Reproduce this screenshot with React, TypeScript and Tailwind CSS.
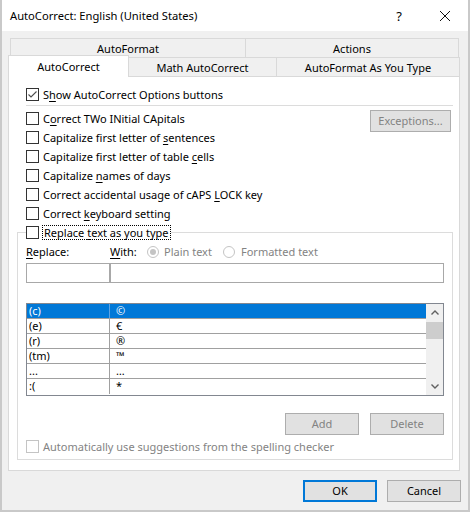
import React from 'react';

const ui = "font-['Noto_Sans',sans-serif] text-[11px] leading-[14px]";

// Windows-style checkbox square
const CheckBox: React.FC<{ checked?: boolean; disabled?: boolean }> = ({ checked, disabled }) => (
  <span
    className={`relative flex h-[13px] w-[13px] shrink-0 items-center justify-center border bg-white ${
      disabled ? 'border-[#c4c4c4]' : 'border-[#333333]'
    }`}
  >
    {checked && (
      <svg width="11" height="11" viewBox="0 0 11 11" className="block">
        <polyline points="1.5,5.5 4,8 9.5,2.5" fill="none" stroke="#4d4d4d" strokeWidth="1.1" />
      </svg>
    )}
  </span>
);

const Radio: React.FC<{ checked?: boolean }> = ({ checked }) => (
  <span className="flex h-[12px] w-[12px] shrink-0 items-center justify-center rounded-full border border-[#c4c4c4] bg-white">
    {checked && <span className="h-[6px] w-[6px] rounded-full bg-[#c4c4c4]" />}
  </span>
);

const CheckRow: React.FC<{ pre: string; key2: string; post: string; checked?: boolean }> = ({ pre, key2, post, checked }) => (
  <div className="flex h-[19px] items-center gap-[4px]">
    <CheckBox checked={checked} />
    <span className="whitespace-nowrap text-black">
      {pre}
      <u className="underline-offset-[2px]">{key2}</u>
      {post}
    </span>
  </div>
);

const entries: [string, string][] = [
  ['(c)', '©'],
  ['(e)', '€'],
  ['(r)', '®'],
  ['(tm)', '™'],
  ['...', '…'],
  [':(', '*'],
];

const Button: React.FC<{ label: string; w: string; disabled?: boolean; primary?: boolean }> = ({ label, w, disabled, primary }) => (
  <div
    className={`flex h-[22px] ${w} items-center justify-center bg-[#e1e1e1] ${
      primary ? 'border-2 border-[#0078d7]' : 'border border-[#adadad]'
    } ${disabled ? 'text-[#838383]' : 'text-black'}`}
  >
    {label}
  </div>
);

export default function App() {
  return (
    <div className={`${ui} flex h-[512px] w-[470px] flex-col border-x-2 border-b-2 border-[#c9c9c9] bg-[#f0f0f0] text-black`}>
      {/* title bar */}
      <div className="flex h-[31px] shrink-0 items-center bg-white pl-[8px]">
        <span className="text-[11.2px]">AutoCorrect: English (United States)</span>
        <div className="ml-auto flex h-full">
          <div className="flex w-[46px] items-center justify-center text-[13px]">?</div>
          <div className="flex w-[46px] items-center justify-center">
            <svg width="12" height="12" viewBox="0 0 12 12">
              <path d="M1 1 L11 11 M11 1 L1 11" stroke="#111" strokeWidth="1" fill="none" />
            </svg>
          </div>
        </div>
      </div>

      <div className="flex flex-col px-[6px] pt-[7px]">
        {/* tab rows */}
        <div className="ml-[2px] flex h-[19px] w-[449px]">
          <div className="flex w-[235px] items-center justify-center border-l border-t border-[#d9d9d9] pt-[2px]">AutoFormat</div>
          <div className="flex flex-1 items-center justify-center border-x border-t border-[#d9d9d9] pt-[2px]">Actions</div>
        </div>
        <div className="-mt-[2px] flex h-[21px] w-[452px] items-end">
          <div className="relative z-10 -mb-px flex h-[22px] w-[121px] items-center justify-center border-x border-t border-[#d9d9d9] bg-white pt-[1px]">
            AutoCorrect
          </div>
          <div className="flex h-[19px] w-[148px] items-center justify-center border-r border-t border-[#d9d9d9] pt-[2px]">Math AutoCorrect</div>
          <div className="flex h-[19px] flex-1 items-center justify-center border-r border-t border-[#d9d9d9] pt-[2px]">AutoFormat As You Type</div>
        </div>

        {/* panel */}
        <div className="flex h-[395px] w-[452px] flex-col border border-[#d9d9d9] bg-white pl-[8px] pt-[8px]">
          <div className="ml-[9px]">
            <CheckRow pre="S" key2="h" post="ow AutoCorrect Options buttons" checked />
          </div>
          <div className="ml-[9px] mt-px h-px w-[427px] bg-[#dcdcdc]" />

          <div className="ml-[9px] mt-[3px] flex w-[425px] justify-between">
            <div className="flex flex-col">
              <CheckRow pre="C" key2="o" post="rrect TWo INitial CApitals" />
              <CheckRow pre="Capitalize first letter of " key2="s" post="entences" />
              <CheckRow pre="Capitalize first letter of table " key2="c" post="ells" />
              <CheckRow pre="Capitalize " key2="n" post="ames of days" />
              <CheckRow pre="Correct accidental usage of cAPS " key2="L" post="OCK key" />
              <CheckRow pre="Correct " key2="k" post="eyboard setting" />
            </div>
            <div className="mt-[1px]">
              <Button label="Exceptions..." w="w-[81px]" disabled />
            </div>
          </div>

          <fieldset className="w-[436px] border border-[#dcdcdc] pb-[3px] pl-[8px]">
            <legend className="flex h-[19px] items-center gap-[3px]">
              <CheckBox />
              <span className="block h-[15px] whitespace-nowrap border border-dotted border-black px-px leading-[13px]">
                {'Replace '}
                <u className="underline-offset-[2px]">t</u>
                {'ext as you type'}
              </span>
            </legend>

            <div className="flex h-[19px] items-center">
              <span className="w-[84px]">
                <u className="underline-offset-[2px]">R</u>eplace:
              </span>
              <span className="w-[37px]">
                <u className="underline-offset-[2px]">W</u>ith:
              </span>
              <span className="flex w-[76px] items-center">
                <Radio checked />
                <span className="ml-[5px] text-[#838383]">Plain text</span>
              </span>
              <span className="flex items-center">
                <Radio />
                <span className="ml-[6px] text-[#838383]">Formatted text</span>
              </span>
            </div>

            <div className="mt-[2px] flex">
              <div className="h-[20px] w-[84px] border border-[#a8a8a8] bg-white" />
              <div className="h-[20px] w-[334px] border border-[#a8a8a8] bg-white" />
            </div>

            <div className="mt-[20px] flex h-[93px] w-[418px] border border-[#828790] bg-white">
              <div className="flex flex-1 flex-col">
                {entries.map(([a, b], i) => {
                  const sel = i === 0;
                  return (
                    <div
                      key={a}
                      className={`flex h-[15px] ${i < entries.length - 1 ? 'border-b border-[#a0a0a0]' : ''} ${
                        sel ? 'bg-[#0078d7] text-white' : 'text-black'
                      }`}
                    >
                      <span className={`w-[83px] border-r pl-[2px] ${sel ? 'border-[#5fa3e3]' : 'border-[#a0a0a0]'}`}>{a}</span>
                      <span className="pl-[6px]">{b}</span>
                    </div>
                  );
                })}
              </div>
              <div className="flex w-[17px] flex-col bg-[#f0f0f0]">
                <div className="flex h-[17px] items-center justify-center">
                  <svg width="8" height="5" viewBox="0 0 8 5">
                    <path d="M0.5 4.5 L4 1 L7.5 4.5" fill="none" stroke="#606060" strokeWidth="1.4" />
                  </svg>
                </div>
                <div className="mt-px h-[17px] bg-[#cdcdcd]" />
                <div className="mt-auto flex h-[17px] items-center justify-center">
                  <svg width="8" height="5" viewBox="0 0 8 5">
                    <path d="M0.5 0.5 L4 4 L7.5 0.5" fill="none" stroke="#606060" strokeWidth="1.4" />
                  </svg>
                </div>
              </div>
            </div>

            <div className="mt-[17px] flex w-[418px] justify-end gap-[11px]">
              <Button label="Add" w="w-[74px]" disabled />
              <Button label="Delete" w="w-[74px]" disabled />
            </div>

            <div className="mt-[2px] flex h-[19px] items-center gap-[4px]">
              <CheckBox disabled />
              <span className="text-[#838383]">Automatically use suggestions from the spelling checker</span>
            </div>
          </fieldset>
        </div>

        {/* footer buttons */}
        <div className="mr-[1px] mt-[9px] flex justify-end gap-[10px]">
          <Button label="OK" w="w-[74px]" primary />
          <Button label="Cancel" w="w-[74px]" />
        </div>
      </div>
    </div>
  );
}
